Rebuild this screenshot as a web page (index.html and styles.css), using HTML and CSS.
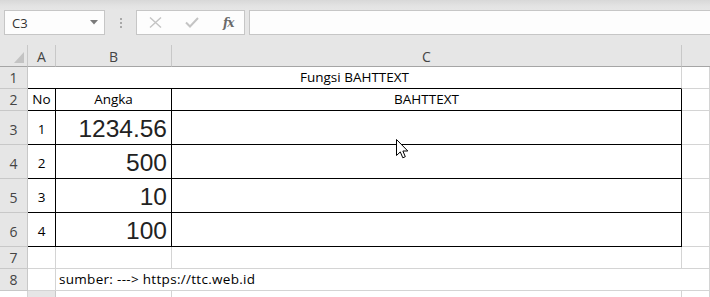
FILE: index.html
```html
<!DOCTYPE html>
<html>
<head>
<meta charset="utf-8">
<link rel="stylesheet" href="styles.css">
</head>
<body>
<div class="app">
  <div class="toolbar">
    <div class="namebox">
      <span class="ref">C3</span>
      <svg class="dd" width="8" height="5" viewBox="0 0 8 5"><path d="M0 0H8L4 4.5Z" fill="#7a7a7a"/></svg>
    </div>
    <div class="grip"><i></i><i></i><i></i></div>
    <div class="fbtns">
      <svg class="ic" width="13" height="11" viewBox="0 0 13 11"><path d="M1 0.5L12 10.5M12 0.5L1 10.5" stroke="#c4c4c4" stroke-width="1.4" fill="none"/></svg>
      <svg class="ic" width="14" height="11" viewBox="0 0 14 11"><path d="M1 5.5L5 9.5L13 1" stroke="#c4c4c4" stroke-width="2" fill="none"/></svg>
      <span class="fx">fx</span>
    </div>
    <div class="fbar"></div>
  </div>
  <div class="sheet">
    <div class="hd corner"><svg width="10" height="11" viewBox="0 0 10 11"><path d="M10 0V11H0Z" fill="#c3c3c3"/></svg></div>
    <div class="hd ch">A</div>
    <div class="hd ch">B</div>
    <div class="hd ch">C</div>
    <div class="hd ch last"></div>

    <div class="hd rh">1</div>
    <div class="c m3 cen bb">Fungsi BAHTTEXT</div>
    <div class="c"></div>

    <div class="hd rh">2</div>
    <div class="c k cen">No</div>
    <div class="c k cen">Angka</div>
    <div class="c k cen">BAHTTEXT</div>
    <div class="c"></div>

    <div class="hd rh tall">3</div>
    <div class="c k cen mid">1</div>
    <div class="c k num">1234.56</div>
    <div class="c k"></div>
    <div class="c"></div>

    <div class="hd rh tall">4</div>
    <div class="c k cen mid">2</div>
    <div class="c k num">500</div>
    <div class="c k"></div>
    <div class="c"></div>

    <div class="hd rh tall">5</div>
    <div class="c k cen mid">3</div>
    <div class="c k num">10</div>
    <div class="c k"></div>
    <div class="c"></div>

    <div class="hd rh tall">6</div>
    <div class="c k cen mid">4</div>
    <div class="c k num">100</div>
    <div class="c k"></div>
    <div class="c"></div>

    <div class="hd rh">7</div>
    <div class="c"></div>
    <div class="c"></div>
    <div class="c"></div>
    <div class="c"></div>

    <div class="hd rh">8</div>
    <div class="c"></div>
    <div class="c m2 src">sumber: ---&gt; https://ttc.web.id</div>
    <div class="c"></div>

    <div class="hd rh">9</div>
    <div class="c"></div>
    <div class="c"></div>
    <div class="c"></div>
    <div class="c"></div>
  </div>
  <svg class="cursor" width="13" height="20" viewBox="0 0 13 20"><path d="M0.5 0.5V16.5L4.3 12.9L6.8 18.8L9.3 17.7L6.9 12H11.8Z" fill="#fff" stroke="#000" stroke-width="1" stroke-linejoin="miter"/></svg>
</div>
</body>
</html>
```

FILE: styles.css
```css
* { box-sizing: border-box; }
html, body { margin: 0; padding: 0; }
body {
  width: 710px;
  height: 297px;
  overflow: hidden;
  background: #ffffff;
  font-family: "Open Sans", "Noto Sans", sans-serif;
  font-size: 13.5px;
  color: #000;
}
.app { position: relative; width: 710px; height: 297px; overflow: hidden; }

.toolbar {
  height: 45px;
  display: flex;
  align-items: flex-start;
  padding-top: 10px;
  padding-left: 4px;
  background: linear-gradient(#d8d8d8 0px, #e3e3e3 6px, #e6e6e6 10px);
}
.namebox {
  width: 101px;
  height: 25px;
  background: #fdfdfd;
  border: 1px solid #c6c6c6;
  display: flex;
  align-items: center;
  justify-content: space-between;
  padding: 0 6px 0 7px;
}
.ref { color: #333; font-size: 13px; }
.grip {
  width: 31px;
  height: 25px;
  display: flex;
  flex-direction: column;
  align-items: center;
  justify-content: center;
  gap: 2px;
}
.grip i { display: block; width: 2px; height: 2px; background: #a8a8a8; }
.fbtns {
  width: 109px;
  height: 25px;
  background: #fdfdfd;
  border: 1px solid #c6c6c6;
  display: flex;
  align-items: center;
  padding-left: 12px;
  gap: 23px;
}
.fx {
  font-family: "DejaVu Serif", "Liberation Serif", serif;
  font-style: italic;
  font-weight: bold;
  font-size: 12px;
  color: #6a6a6a;
  margin-left: 1px;
  letter-spacing: -1px;
}
.fbar {
  flex: 1;
  height: 25px;
  margin-left: 4px;
  background: #fdfdfd;
  border: 1px solid #c6c6c6;
  border-right: none;
}

.sheet {
  display: grid;
  grid-template-columns: 28px 28px 116px 510px 1fr;
  grid-template-rows: 22px 22px 22px 34px 34px 34px 34px 22px 22px 22px;
}
.hd {
  background: #e6e6e6;
  color: #444;
  display: flex;
  align-items: center;
  justify-content: center;
  font-size: 14px;
}
.ch {
  border-right: 1px solid #c8c8c8;
  border-bottom: 1px solid #a5a5a5;
  padding-top: 1px;
}
.ch.last { border-right: none; }
.corner {
  border-right: 1px solid #c8c8c8;
  border-bottom: 1px solid #a5a5a5;
  align-items: flex-end;
  justify-content: flex-end;
  padding: 0 3px 3px 0;
}
.corner svg { display: block; }
.rh {
  border-right: 1px solid #c8c8c8;
  border-bottom: 1px solid #c8c8c8;
  align-items: flex-end;
  padding-bottom: 1px;
}
.rh.tall { padding-bottom: 5px; }

.c {
  border-right: 1px solid #d4d4d4;
  border-bottom: 1px solid #d4d4d4;
  display: flex;
  align-items: flex-end;
  padding: 0 3px 2px 3px;
  white-space: nowrap;
  min-width: 0;
}
.m3 { grid-column: span 3; }
.m2 { grid-column: span 3; border-right: 1px solid #d4d4d4; }
.bb { border-bottom: 1px solid #000; }
.k { border-right: 1px solid #000; border-bottom: 1px solid #000; }
.cen { justify-content: center; }
.mid { align-items: center; padding-bottom: 0; padding-top: 2px; }
.num {
  justify-content: flex-end;
  font-family: "Liberation Sans", Arial, sans-serif;
  font-size: 24.5px;
  color: #222;
  padding-bottom: 1px;
  padding-right: 4px;
}
.src { overflow: visible; letter-spacing: 0.3px; }

.cursor {
  position: absolute;
  left: 396px;
  top: 139px;
}
```
